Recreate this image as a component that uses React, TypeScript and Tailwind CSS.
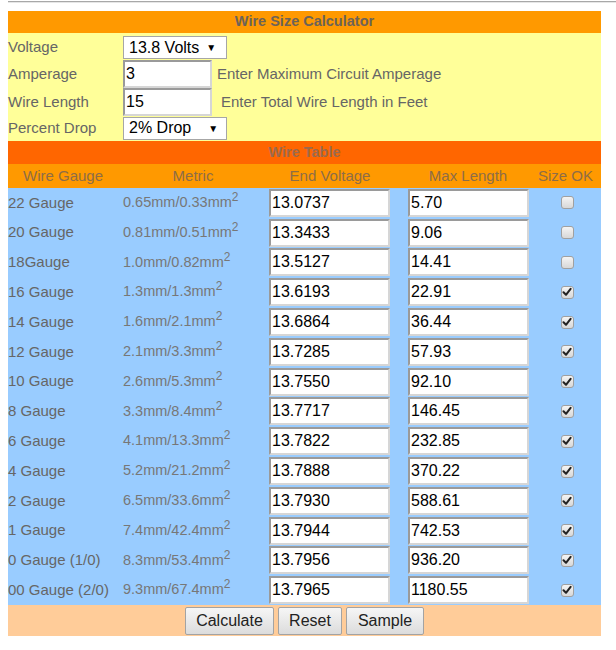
import React from "react";

const ROWS = [
  { gauge: "22 Gauge", metric: "0.65mm/0.33mm", volt: "13.0737", len: "5.70", ok: false },
  { gauge: "20 Gauge", metric: "0.81mm/0.51mm", volt: "13.3433", len: "9.06", ok: false },
  { gauge: "18Gauge", metric: "1.0mm/0.82mm", volt: "13.5127", len: "14.41", ok: false },
  { gauge: "16 Gauge", metric: "1.3mm/1.3mm", volt: "13.6193", len: "22.91", ok: true },
  { gauge: "14 Gauge", metric: "1.6mm/2.1mm", volt: "13.6864", len: "36.44", ok: true },
  { gauge: "12 Gauge", metric: "2.1mm/3.3mm", volt: "13.7285", len: "57.93", ok: true },
  { gauge: "10 Gauge", metric: "2.6mm/5.3mm", volt: "13.7550", len: "92.10", ok: true },
  { gauge: "8 Gauge", metric: "3.3mm/8.4mm", volt: "13.7717", len: "146.45", ok: true },
  { gauge: "6 Gauge", metric: "4.1mm/13.3mm", volt: "13.7822", len: "232.85", ok: true },
  { gauge: "4 Gauge", metric: "5.2mm/21.2mm", volt: "13.7888", len: "370.22", ok: true },
  { gauge: "2 Gauge", metric: "6.5mm/33.6mm", volt: "13.7930", len: "588.61", ok: true },
  { gauge: "1 Gauge", metric: "7.4mm/42.4mm", volt: "13.7944", len: "742.53", ok: true },
  { gauge: "0 Gauge (1/0)", metric: "8.3mm/53.4mm", volt: "13.7956", len: "936.20", ok: true },
  { gauge: "00 Gauge (2/0)", metric: "9.3mm/67.4mm", volt: "13.7965", len: "1180.55", ok: true },
];

const GRID = "grid grid-cols-[110px_150px_124px_14px_124px_71px]";

function Box({ value, w }: { value: string; w: string }) {
  return (
    <input
      readOnly
      value={value}
      className={`${w} h-[28px] bg-white border-2 border-t-[#9a9a9a] border-l-[#9a9a9a] border-r-[#d6d6d6] border-b-[#d6d6d6] px-[1px] text-[16px] text-black outline-none`}
    />
  );
}

function Pick({ label, gap }: { label: string; gap: string }) {
  return (
    <div className="w-[104px] h-[23px] bg-white border border-[#a6a6a6] flex items-center px-[5px] text-[16px] text-black">
      <span>{label}</span>
      <span className={`${gap} text-[10px]`}>▼</span>
    </div>
  );
}

function Check({ on }: { on: boolean }) {
  return (
    <div className="w-[13px] h-[13px] rounded-[3px] border border-[#a0a0a0] bg-gradient-to-b from-[#f4f4f4] to-[#d8d8d8] flex items-center justify-center">
      {on && (
        <svg width="10" height="10" viewBox="0 0 10 10">
          <path d="M1.5 5.2 L4 7.8 L8.6 1.8" stroke="#222" strokeWidth="2" fill="none" strokeLinecap="round" strokeLinejoin="round" />
        </svg>
      )}
    </div>
  );
}

function Btn({ label, w }: { label: string; w: string }) {
  return (
    <button className={`${w} h-[28px] rounded-[2px] border border-[#a3a3a3] bg-gradient-to-b from-[#f6f6f6] to-[#dcdcdc] text-[16px] text-[#222]`}>
      {label}
    </button>
  );
}

export default function App() {
  return (
    <div className="w-[616px] h-[650px] bg-white font-['Liberation_Sans',Arial,sans-serif] text-[15px] text-[#666]">
      <div className="pt-[1px] pl-[8px]">
        <div className="border-t border-[#a8a8a8] border-b border-b-[#e6e6e6]" />
      </div>

      <div className="ml-[8px] mt-[8px] w-[593px]">
        {/* calculator inputs */}
        <div className="h-[22px] bg-[#FF9900] flex items-center justify-center font-bold text-[14.5px] text-[#6d6358]">
          Wire Size Calculator
        </div>
        <div className="bg-[#FFFF99] pt-[2px] pb-[1px]">
          <div className="flex items-center h-[25px]">
            <span className="w-[115px]">Voltage</span>
            <Pick label="13.8 Volts" gap="ml-[7px]" />
          </div>
          <div className="flex items-center h-[28px]">
            <span className="w-[115px]">Amperage</span>
            <Box value="3" w="w-[89px]" />
            <span className="ml-[5px]">Enter Maximum Circuit Amperage</span>
          </div>
          <div className="flex items-center h-[28px]">
            <span className="w-[115px]">Wire Length</span>
            <Box value="15" w="w-[89px]" />
            <span className="ml-[9px]">Enter Total Wire Length in Feet</span>
          </div>
          <div className="flex items-center h-[24px]">
            <span className="w-[115px]">Percent Drop</span>
            <Pick label="2% Drop" gap="ml-[17px]" />
          </div>
        </div>

        {/* results */}
        <div className="h-[23px] bg-[#FF6600] flex items-center justify-center font-bold text-[14.5px] text-[#9b6a4d]">
          Wire Table
        </div>
        <div className={`${GRID} h-[24px] bg-[#FF9900] items-center text-[#8e6d47]`}>
          <span className="text-center">Wire Gauge</span>
          <span className="text-center">Metric</span>
          <span className="text-center">End Voltage</span>
          <span />
          <span className="text-center">Max Length</span>
          <span className="text-center">Size OK</span>
        </div>
        <div className="bg-[#99CCFF]">
          {ROWS.map((r) => (
            <div key={r.gauge} className={`${GRID} h-[29.8px] items-center`}>
              <span className="whitespace-nowrap">{r.gauge}</span>
              <span className="pl-[5px] text-[14.5px] text-[#777] whitespace-nowrap">
                {r.metric}
                <sup className="text-[12px]">2</sup>
              </span>
              <div className="pl-[1px]">
                <Box value={r.volt} w="w-[121px]" />
              </div>
              <span />
              <div className="pl-[2px]">
                <Box value={r.len} w="w-[121px]" />
              </div>
              <div className="flex justify-center pl-[3px]">
                <Check on={r.ok} />
              </div>
            </div>
          ))}
        </div>
        <div className="h-[31px] bg-[#FFCC99] flex items-center justify-center gap-[4px]">
          <Btn label="Calculate" w="w-[89px]" />
          <Btn label="Reset" w="w-[64px]" />
          <Btn label="Sample" w="w-[78px]" />
        </div>
      </div>
    </div>
  );
}
